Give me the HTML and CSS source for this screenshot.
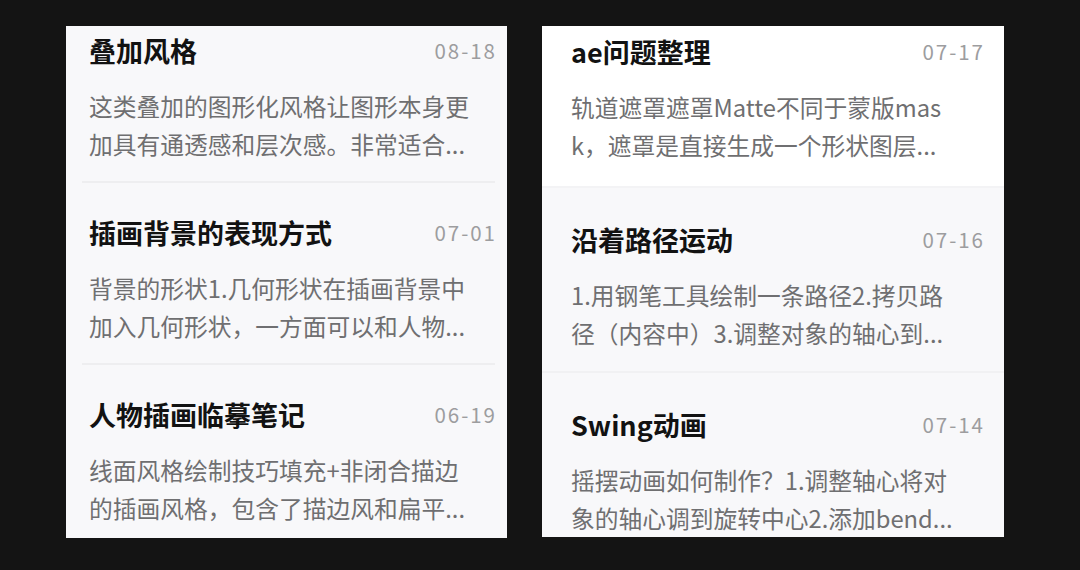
FILE: index.html
```html
<!DOCTYPE html>
<html lang="zh-CN">
<head>
<meta charset="utf-8">
<title>笔记列表</title>
<link rel="stylesheet" href="styles.css">
</head>
<body>
<main class="stage">
  <section class="panel panel-left">
    <ul class="list list-left">
      <li class="note">
        <div class="note-head"><h2 class="note-title">叠加风格</h2><span class="note-date">08-18</span></div>
        <p class="note-desc"><span class="line">这类叠加的图形化风格让图形本身更</span><span class="line">加具有通透感和层次感。非常适合...</span></p>
      </li>
      <li class="note">
        <div class="note-head"><h2 class="note-title">插画背景的表现方式</h2><span class="note-date">07-01</span></div>
        <p class="note-desc"><span class="line">背景的形状1.几何形状在插画背景中</span><span class="line">加入几何形状，一方面可以和人物...</span></p>
      </li>
      <li class="note">
        <div class="note-head"><h2 class="note-title">人物插画临摹笔记</h2><span class="note-date">06-19</span></div>
        <p class="note-desc"><span class="line">线面风格绘制技巧填充+非闭合描边</span><span class="line">的插画风格，包含了描边风和扁平...</span></p>
      </li>
    </ul>
  </section>
  <section class="panel panel-right">
    <ul class="list list-right">
      <li class="note note-active">
        <div class="note-head"><h2 class="note-title">ae问题整理</h2><span class="note-date">07-17</span></div>
        <p class="note-desc"><span class="line">轨道遮罩遮罩Matte不同于蒙版mas</span><span class="line">k，遮罩是直接生成一个形状图层...</span></p>
      </li>
      <li class="note">
        <div class="note-head"><h2 class="note-title">沿着路径运动</h2><span class="note-date">07-16</span></div>
        <p class="note-desc"><span class="line">1.用钢笔工具绘制一条路径2.拷贝路</span><span class="line">径（内容中）3.调整对象的轴心到...</span></p>
      </li>
      <li class="note">
        <div class="note-head"><h2 class="note-title">Swing动画</h2><span class="note-date">07-14</span></div>
        <p class="note-desc"><span class="line">摇摆动画如何制作？1.调整轴心将对</span><span class="line">象的轴心调到旋转中心2.添加bend...</span></p>
      </li>
    </ul>
  </section>
</main>
</body>
</html>
```

FILE: styles.css
```css
* { box-sizing: border-box; }

html, body {
  margin: 0;
  padding: 0;
  background: #141414;
}

body {
  width: 1080px;
  height: 570px;
  overflow: hidden;
  font-family: "Noto Sans CJK SC", "Noto Sans", sans-serif;
}

.stage {
  display: flex;
  align-items: flex-start;
  gap: 35px;
  padding: 26px 0 0 66px;
}

.panel {
  overflow: hidden;
  background: #f8f8fa;
}

.panel-left {
  width: 441px;
  height: 512px;
}

.panel-right {
  width: 462px;
  height: 511px;
}

.list {
  list-style: none;
  margin: 0;
  padding: 0;
}

.list-left { margin-top: -25px; }
.list-right { margin-top: -26px; }

.note-head {
  display: flex;
  align-items: center;
  justify-content: space-between;
  height: 36px;
}

.note-title {
  margin: 0;
  font-size: 27px;
  line-height: 36px;
  font-weight: 700;
  color: #121212;
}

.note-date {
  font-size: 20.5px;
  line-height: 36px;
  letter-spacing: 2px;
  margin-right: -2px;
  color: #9d9d9f;
  position: relative;
  top: -1px;
}

.note-desc {
  margin: 18px 0 0;
  font-size: 23.75px;
  line-height: 38px;
  color: #6f6f71;
}

.line {
  display: block;
  white-space: nowrap;
}

/* left list: inset separators */
.list-left .note {
  margin: 0 12px 0 16px;
  padding: 32px 0 18px 7px;
  border-bottom: 2px solid #eeeef0;
}

/* right list: full-width rows */
.list-right .note {
  padding: 34px 21px 19px 29px;
  border-bottom: 2px solid #f1f1f3;
}

.list-right .note-active {
  background: #ffffff;
  border-bottom-color: #f3f3f5;
  padding-bottom: 22px;
}
```
